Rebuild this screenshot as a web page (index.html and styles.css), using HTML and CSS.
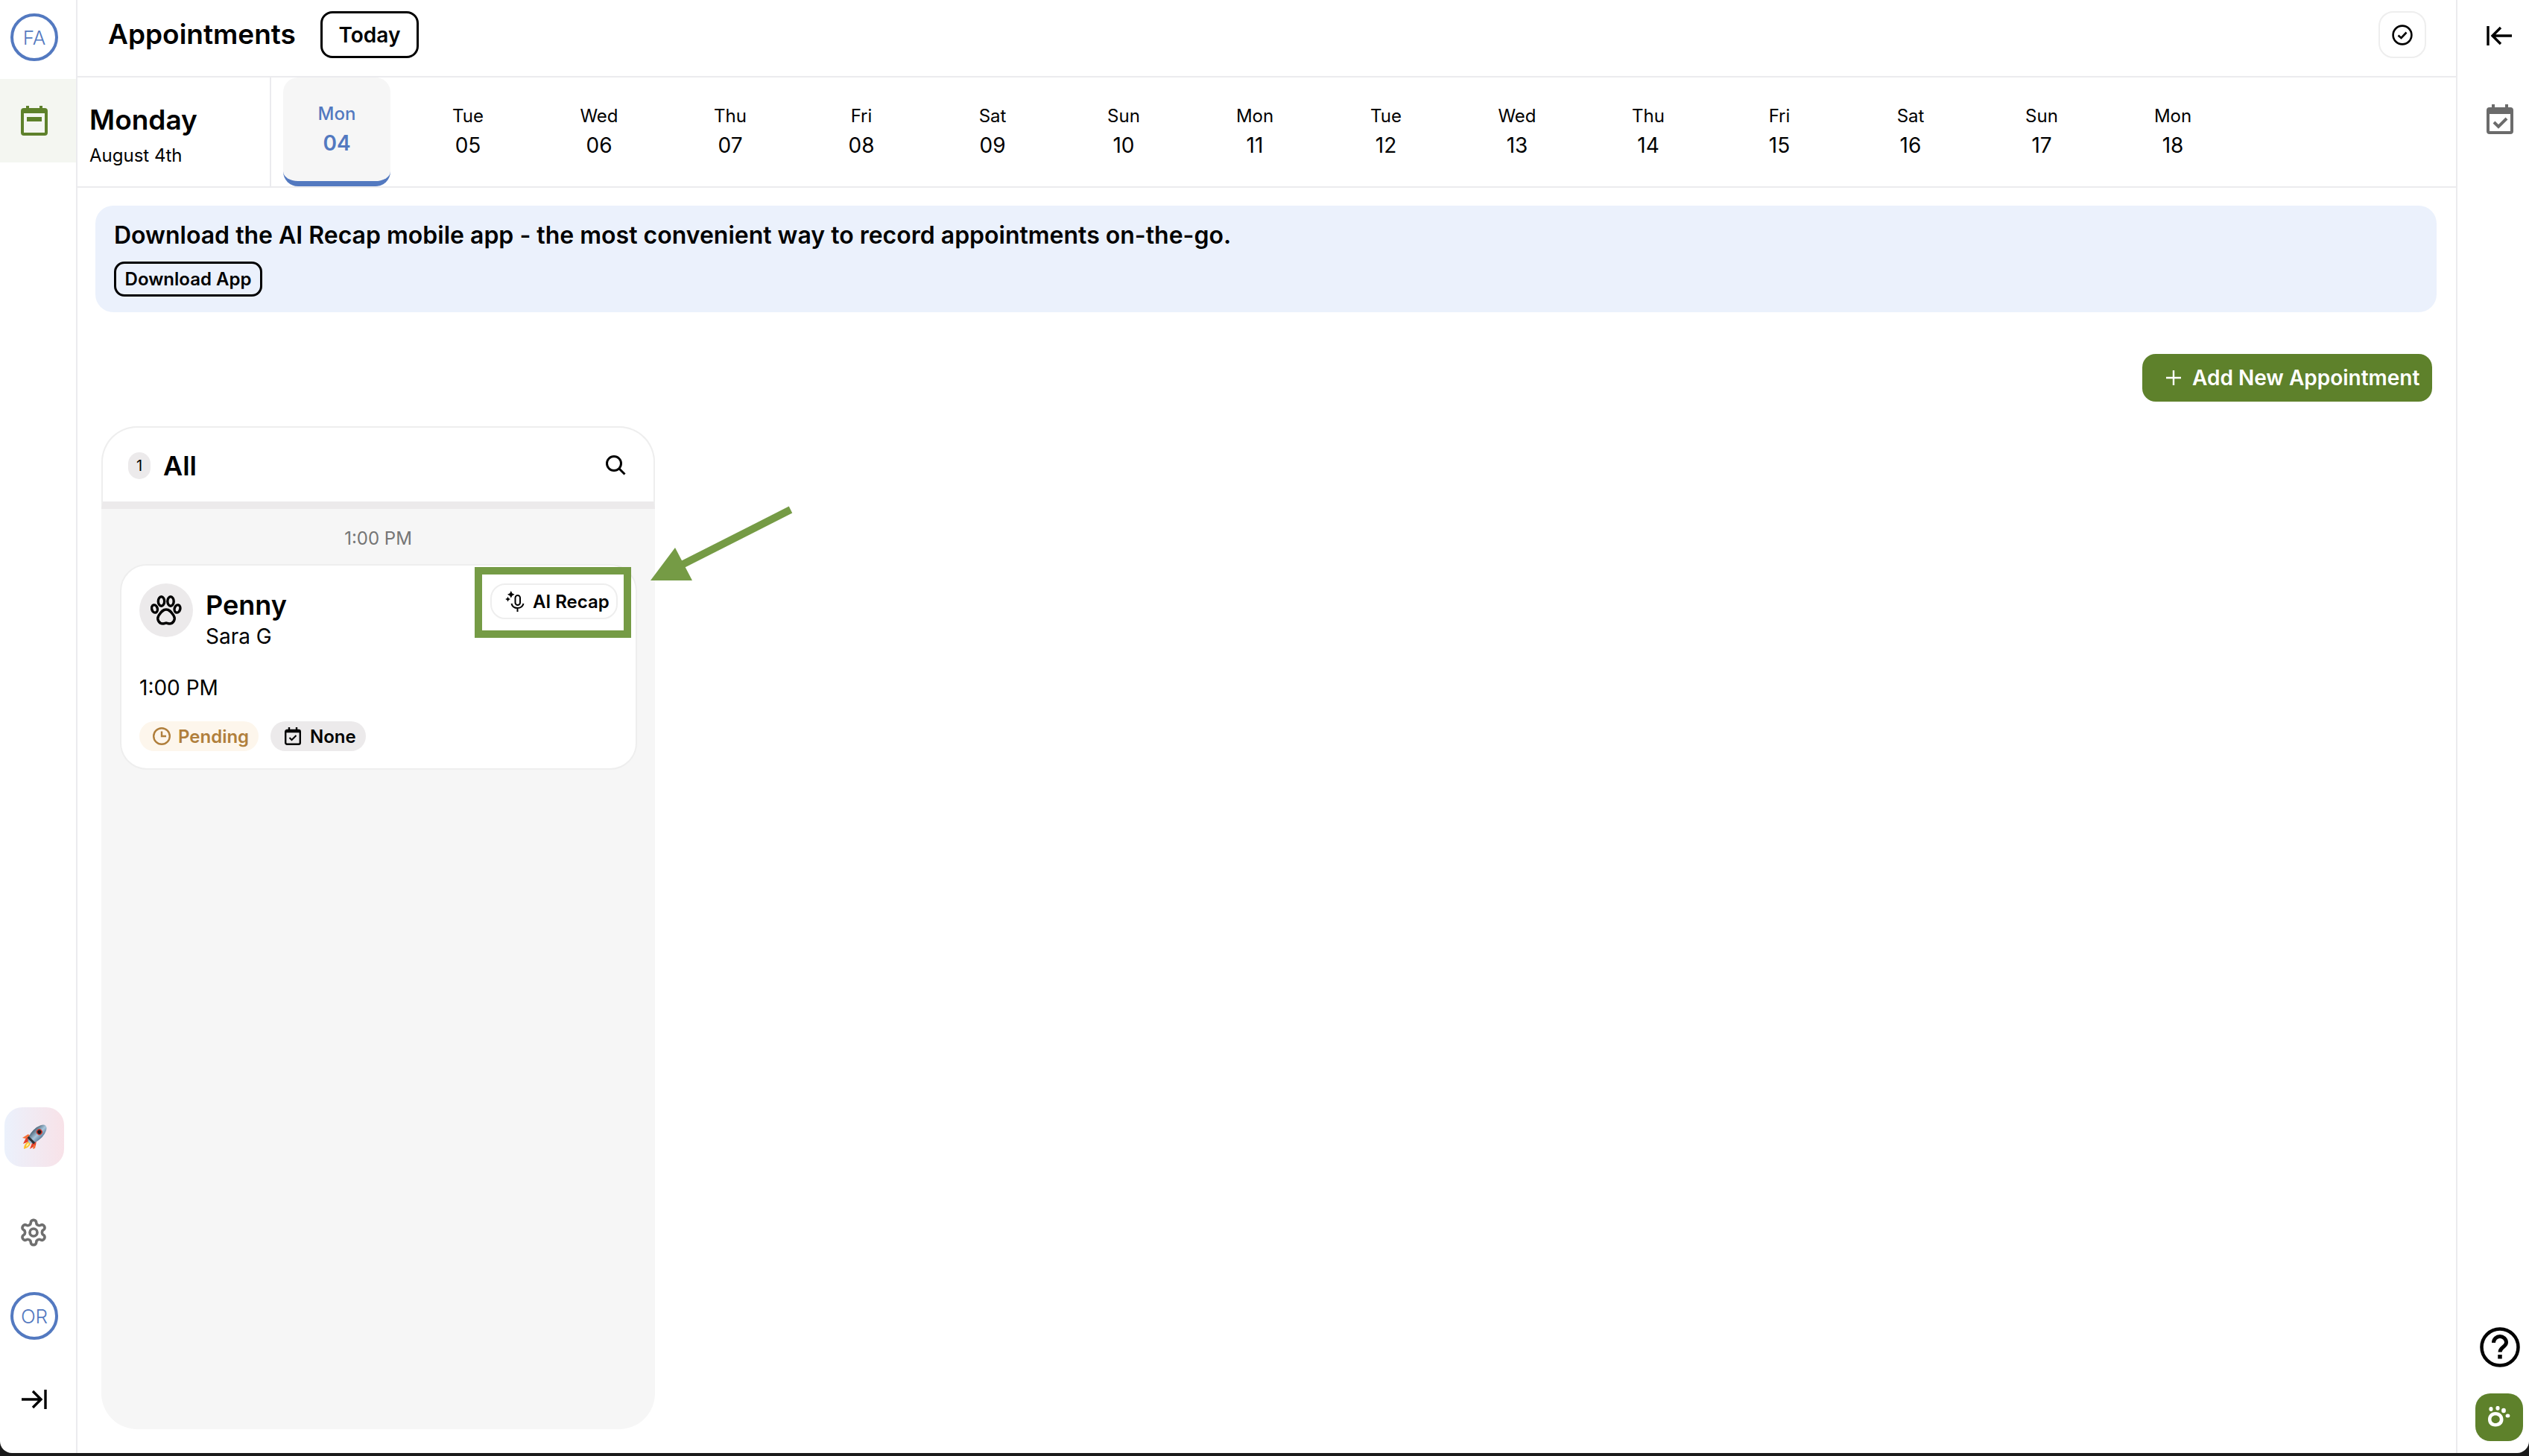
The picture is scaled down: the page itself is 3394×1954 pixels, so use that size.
FILE: index.html
```html
<!DOCTYPE html>
<html lang="en">
<head>
  <meta charset="UTF-8" />
  <title>Appointments</title>
  <link rel="stylesheet" href="styles.css">
</head>
<body>
  <div class="window">
    <nav class="sidenav">
      <div class="avatar avatar-top">FA</div>
      <div class="nav-item active">
        <svg width="36" height="40" viewBox="0 0 36 40" fill="none"><path d="M9 0v5M27 0v5" stroke="#5e812b" stroke-width="4"/><rect x="2" y="5" width="32" height="33" rx="2" stroke="#5e812b" stroke-width="4"/><rect x="2" y="5" width="32" height="5" fill="#5e812b"/><rect x="8" y="15" width="20" height="6" fill="#5e812b"/></svg>
      </div>
      <div class="nav-bottom">
        <div class="rocket-box">
          <svg width="34" height="34" viewBox="0 0 34 34">
            <defs><linearGradient id="hull" x1="0" y1="0" x2="1" y2="0"><stop offset="0" stop-color="#4d6678"/><stop offset=".55" stop-color="#a9c6dc"/><stop offset="1" stop-color="#5d7f9c"/></linearGradient></defs>
            <path d="M2 26 8 14l6 1-4 8z" fill="#e5402a"/>
            <path d="M11 33l8-5 1-7-6 4z" fill="#e5402a"/>
            <path d="M1 18l8-5 2 3-6 3zM15 33l1-6 3 1-1 4z" fill="#f5713a"/>
            <path d="M3 33c0-5 2-8 6-10l3 3c-2 4-5 6-9 7z" fill="#fbc02d"/>
            <path d="M6 30c0-2 1-4 3-5l1 1c-1 2-2 3-4 4z" fill="#fff3b0"/>
            <g transform="rotate(45 21 13)"><ellipse cx="21" cy="13" rx="7.5" ry="16" fill="url(#hull)"/><circle cx="21" cy="9" r="4" fill="#c9362a"/><circle cx="21" cy="9" r="2.6" fill="#1c1c22"/><rect x="15" y="23" width="12" height="3" fill="#2e3238"/></g>
          </svg>
        </div>
        <svg class="gear" width="40" height="42" viewBox="0 0 24 24" fill="none" stroke="#6f6f6f" stroke-width="2.2" stroke-linecap="round" stroke-linejoin="round"><path d="M12.22 2h-.44a2 2 0 0 0-2 2v.18a2 2 0 0 1-1 1.73l-.43.25a2 2 0 0 1-2 0l-.15-.08a2 2 0 0 0-2.73.73l-.22.38a2 2 0 0 0 .73 2.73l.15.1a2 2 0 0 1 1 1.72v.51a2 2 0 0 1-1 1.74l-.15.09a2 2 0 0 0-.73 2.73l.22.38a2 2 0 0 0 2.73.73l.15-.08a2 2 0 0 1 2 0l.43.25a2 2 0 0 1 1 1.73V20a2 2 0 0 0 2 2h.44a2 2 0 0 0 2-2v-.18a2 2 0 0 1 1-1.73l.43-.25a2 2 0 0 1 2 0l.15.08a2 2 0 0 0 2.73-.73l.22-.39a2 2 0 0 0-.73-2.73l-.15-.08a2 2 0 0 1-1-1.74v-.5a2 2 0 0 1 1-1.74l.15-.09a2 2 0 0 0 .73-2.73l-.22-.38a2 2 0 0 0-2.73-.73l-.15.08a2 2 0 0 1-2 0l-.43-.25a2 2 0 0 1-1-1.73V4a2 2 0 0 0-2-2z"/><circle cx="12" cy="12" r="3"/></svg>
        <div class="avatar">OR</div>
        <svg class="expand" width="34" height="26" viewBox="0 0 34 26" fill="none" stroke="#000" stroke-width="3.4"><path d="M0 13h26M15 2l11 11-11 11"/><path d="M32 0v26"/></svg>
      </div>
    </nav>

    <main class="main">
      <header class="topbar">
        <h1>Appointments</h1>
        <button class="today-btn">Today</button>
        <button class="check-btn">
          <svg width="28" height="28" viewBox="0 0 28 28" fill="none" stroke="#000" stroke-width="2.6"><circle cx="14" cy="14" r="12.4"/><path d="M8.5 14.5l4 3.5 7-7.5"/></svg>
        </button>
      </header>

      <section class="datebar">
        <div class="current-date">
          <div class="weekday">Monday</div>
          <div class="full-date">August 4th</div>
        </div>
        <div class="days">
          <div class="day selected"><span>Mon</span><b>04</b></div>
          <div class="day"><span>Tue</span><b>05</b></div>
          <div class="day"><span>Wed</span><b>06</b></div>
          <div class="day"><span>Thu</span><b>07</b></div>
          <div class="day"><span>Fri</span><b>08</b></div>
          <div class="day"><span>Sat</span><b>09</b></div>
          <div class="day"><span>Sun</span><b>10</b></div>
          <div class="day"><span>Mon</span><b>11</b></div>
          <div class="day"><span>Tue</span><b>12</b></div>
          <div class="day"><span>Wed</span><b>13</b></div>
          <div class="day"><span>Thu</span><b>14</b></div>
          <div class="day"><span>Fri</span><b>15</b></div>
          <div class="day"><span>Sat</span><b>16</b></div>
          <div class="day"><span>Sun</span><b>17</b></div>
          <div class="day"><span>Mon</span><b>18</b></div>
        </div>
      </section>

      <div class="banner">
        <p>Download the AI Recap mobile app - the most convenient way to record appointments on-the-go.</p>
        <button class="download-btn">Download App</button>
      </div>

      <div class="actions">
        <button class="add-btn">
          <svg width="20" height="20" viewBox="0 0 20 20" stroke="#fff" stroke-width="2.4"><path d="M10 0v20M0 10h20"/></svg>
          Add New Appointment
        </button>
      </div>

      <section class="column">
        <div class="column-head">
          <span class="count">1</span>
          <span class="column-title">All</span>
          <svg class="search" width="28" height="28" viewBox="0 0 28 28" fill="none" stroke="#000" stroke-width="3"><circle cx="12" cy="12" r="9.5"/><path d="M19 19l7.5 7.5"/></svg>
        </div>
        <div class="time-label">1:00 PM</div>
        <article class="card">
          <div class="card-top">
            <div class="pet-avatar">
              <svg width="42" height="42" viewBox="0 0 42 42" fill="none" stroke="#000" stroke-width="3.4"><ellipse cx="5.5" cy="19" rx="3.8" ry="5.2" transform="rotate(-15 5.5 19)"/><ellipse cx="14.5" cy="9" rx="4.2" ry="6.2"/><ellipse cx="27" cy="9" rx="4.2" ry="6.2"/><ellipse cx="36" cy="19" rx="3.8" ry="5.2" transform="rotate(15 36 19)"/><path d="M21 20c-5 0-7 4-10 8-3 5 0 11 6 11 2 0 3-1 4-1s2 1 4 1c6 0 9-6 6-11-3-4-5-8-10-8z"/></svg>
            </div>
            <div class="pet-info">
              <div class="pet-name">Penny</div>
              <div class="owner">Sara G</div>
            </div>
            <button class="recap-btn">
              <svg width="28" height="28" viewBox="0 0 28 28" fill="none"><path d="M6 0l2 4 4 2-4 2-2 4-2-4-4-2 4-2zM0 0" fill="#000" transform="translate(3 0) scale(.8)"/><path d="M3 9l1.3 2.7L7 13l-2.7 1.3L3 17l-1.3-2.7L-1 13l2.700-1.300z" fill="#000" transform="translate(1 0) scale(.85)"/><rect x="13.500" y="6" width="6.500" height="13" rx="3.250" stroke="#000" stroke-width="2"/><path d="M8.500 17c.8 4 4 6 8 6s7-2 8-6M16.500 23v5" stroke="#000" stroke-width="2"/></svg>
              AI Recap
            </button>
            <div class="highlight"></div>
          </div>
          <div class="appt-time">1:00 PM</div>
          <div class="chips">
            <span class="chip pending">
              <svg width="24" height="24" viewBox="0 0 24 24" fill="none" stroke="#b07f3c" stroke-width="2.400"><circle cx="12" cy="12" r="10.800"/><path d="M12 5.500V12h6"/></svg>
              Pending
            </span>
            <span class="chip none">
              <svg width="22" height="24" viewBox="0 0 22 24" fill="none" stroke="#000" stroke-width="2.400"><rect x="1.200" y="4" width="19.600" height="18.800" rx="2"/><path d="M6 0v5M16 0v5M1 6h20" /><path d="M6.500 14l3 3 6-6" stroke-width="2"/></svg>
              None
            </span>
          </div>
        </article>
      </section>
    </main>

    <aside class="sidepanel">
      <svg class="collapse" width="34" height="26" viewBox="0 0 34 26" fill="none" stroke="#000" stroke-width="3.400"><path d="M2 0v26"/><path d="M34 13H8M19 2L8 13l11 11"/></svg>
      <svg class="tasks" width="36" height="40" viewBox="0 0 36 40" fill="none"><path d="M9 0v6M27 0v6" stroke="#6b6b6b" stroke-width="4"/><rect x="2" y="6" width="32" height="32" rx="2" stroke="#6b6b6b" stroke-width="4"/><rect x="2" y="6" width="32" height="7" fill="#6b6b6b"/><path d="M10 24l6 6 11-11" stroke="#6b6b6b" stroke-width="4"/></svg>
      <div class="side-bottom">
        <svg class="help" width="54" height="54" viewBox="0 0 54 54" fill="none" stroke="#000"><circle cx="27" cy="27" r="24.500" stroke-width="4.500"/><path d="M18.500 21c0-5 4-8.500 8.500-8.500s8.500 3.500 8.500 8c0 6-8.500 6.500-8.500 13" stroke-width="5"/><path d="M27 37v5.500" stroke-width="5.500"/></svg>
        <button class="paw-btn">
          <svg width="30" height="30" viewBox="0 0 30 30" fill="#fff"><ellipse cx="4" cy="4" rx="2.600" ry="3" /><ellipse cx="13" cy="2.800" rx="2.600" ry="3"/><ellipse cx="21" cy="6" rx="2.900" ry="3.200"/><ellipse cx="26.500" cy="13" rx="2.900" ry="2.500"/><path fill-rule="evenodd" d="M10 8c6.500 0 10.500 4.500 10.500 10S16.500 27.500 10 27.500 0 23.500 0 18 3.500 8 10 8zm0 4.500c-3.500 0-5.500 2.500-5.500 5.200s2 5.300 5.500 5.300 5.800-2.500 5.800-5.300-2.300-5.200-5.800-5.200z"/></svg>
        </button>
      </div>
    </aside>

    <svg class="arrow" width="210" height="110" viewBox="0 0 210 110"><path d="M201 9L55 83" stroke="#759b45" stroke-width="10"/><path d="M46 60L13 104h56z" fill="#759b45"/></svg>
  </div>
</body>
</html>
```

FILE: styles.css
```css
:root {
  --green: #5e812b;
  --blue: #5379c0;
  --line: #ebebee;
  --soft: #f6f6f6;
  --chip: #eceaeb;
}

* {
  box-sizing: border-box;
  margin: 0;
  padding: 0;
  font-family: 'Inter', sans-serif;
}

html, body {
  height: 100%;
  background: #1a1a1a;
  overflow: hidden;
}

button {
  background: none;
  color: #000;
  cursor: pointer;
}

.window {
  position: relative;
  display: flex;
  height: 1950px;
  background: #fff;
  border-radius: 0 0 16px 16px;
  color: #000;
}

/* left nav */
.sidenav {
  width: 104px;
  flex-shrink: 0;
  border-right: 2px solid var(--line);
  display: flex;
  flex-direction: column;
}

.avatar {
  width: 64px;
  height: 64px;
  margin-left: 14px;
  border: 4px solid var(--blue);
  border-radius: 50%;
  display: flex;
  align-items: center;
  justify-content: center;
  font-size: 26px;
  font-weight: 300;
  color: var(--blue);
}

.avatar-top {
  margin-top: 18px;
}

.nav-item {
  height: 112px;
  margin-top: 24px;
  padding: 36px 0 0 28px;
}

.nav-item.active {
  background: #f4f6f1;
}

.nav-bottom {
  margin-top: auto;
  padding-bottom: 59px;
  display: flex;
  flex-direction: column;
}

.rocket-box {
  width: 80px;
  height: 80px;
  margin-left: 6px;
  border-radius: 24px;
  background: linear-gradient(90deg, #ebf1fc, #f8e2e8);
  display: flex;
  align-items: center;
  justify-content: center;
}

.gear {
  margin: 67px 0 59px 25px;
}

.expand {
  margin: 67px 0 0 29px;
}

/* main area */
.main {
  flex: 1;
  min-width: 0;
}

.topbar {
  height: 104px;
  border-bottom: 2px solid var(--line);
  padding: 15px 40px 0 41px;
  display: flex;
  align-items: flex-start;
}

.topbar h1 {
  margin-top: 9px;
  font-size: 37px;
  line-height: 44px;
  font-weight: 600;
}

.today-btn {
  width: 132px;
  height: 63px;
  margin-left: 33px;
  border: 3px solid #000;
  border-radius: 16px;
  font-size: 28px;
  font-weight: 600;
}

.check-btn {
  width: 64px;
  height: 63px;
  margin-left: auto;
  border: 2px solid #eeeeee;
  border-radius: 20px;
  display: flex;
  align-items: center;
  justify-content: center;
}

.datebar {
  height: 148px;
  border-bottom: 2px solid var(--line);
  display: flex;
}

.current-date {
  width: 260px;
  border-right: 2px solid var(--line);
  padding: 35px 0 0 16px;
}

.weekday {
  font-size: 37px;
  line-height: 44px;
  font-weight: 600;
}

.full-date {
  margin-top: 11px;
  font-size: 24px;
  line-height: 30px;
}

.days {
  display: flex;
  gap: 32px;
  padding-left: 16px;
}

.day {
  width: 144px;
  display: flex;
  flex-direction: column;
  align-items: center;
  padding-top: 37px;
  font-size: 24px;
  line-height: 30px;
}

.day b {
  margin-top: 9px;
  font-size: 28px;
  line-height: 30px;
  font-weight: 400;
}

.day.selected {
  height: 146px;
  padding-top: 34px;
  background: var(--soft);
  border-bottom: 7px solid var(--blue);
  border-radius: 20px;
  color: var(--blue);
  font-weight: 500;
}

.day.selected b {
  font-weight: 600;
}

.banner {
  margin: 24px 26px 0 24px;
  height: 143px;
  padding: 20px 25px 0;
  background: #ebf1fc;
  border-radius: 24px;
}

.banner p {
  font-size: 32px;
  line-height: 40px;
  font-weight: 600;
}

.download-btn {
  display: block;
  width: 199px;
  height: 47px;
  margin-top: 15px;
  border: 3px solid #000;
  border-radius: 14px;
  font-size: 24px;
  font-weight: 600;
}

.actions {
  display: flex;
  justify-content: flex-end;
  margin-top: 56px;
  padding-right: 32px;
}

.add-btn {
  width: 389px;
  height: 64px;
  border: none;
  border-radius: 18px;
  background: var(--green);
  color: #fff;
  display: flex;
  align-items: center;
  padding-left: 32px;
  gap: 15px;
  font-size: 28px;
  font-weight: 600;
  white-space: nowrap;
}

/* appointments column */
.column {
  width: 743px;
  height: 1346px;
  margin: 33px 0 0 32px;
  background: var(--soft);
  border-radius: 48px;
}

.column-head {
  height: 111px;
  padding: 33px 37px 0 34px;
  background: #fff;
  border: 2px solid #eeeeee;
  border-bottom: 10px solid var(--chip);
  border-radius: 48px 48px 0 0;
  display: flex;
  align-items: flex-start;
}

.count {
  width: 30px;
  height: 36px;
  background: var(--chip);
  border-radius: 15px;
  font-size: 20px;
  line-height: 36px;
  text-align: center;
}

.column-title {
  margin-left: 17px;
  font-size: 36px;
  line-height: 36px;
  font-weight: 600;
}

.search {
  margin: 3px 0 0 auto;
}

.time-label {
  margin-top: 25px;
  font-size: 24px;
  line-height: 30px;
  text-align: center;
  color: #757575;
}

.card {
  height: 276px;
  margin: 19px 24px 0 25px;
  padding: 24px;
  background: #fff;
  border: 2px solid #eeeeee;
  border-radius: 36px;
}

.card-top {
  position: relative;
  display: flex;
  align-items: flex-start;
}

.pet-avatar {
  width: 72px;
  height: 72px;
  background: var(--chip);
  border-radius: 50%;
  display: flex;
  align-items: center;
  justify-content: center;
}

.pet-info {
  margin-left: 17px;
}

.pet-name {
  margin-top: 7px;
  font-size: 36px;
  line-height: 44px;
  font-weight: 600;
}

.owner {
  margin-top: 3px;
  font-size: 28px;
  line-height: 34px;
}

.recap-btn {
  width: 171px;
  height: 48px;
  margin-left: auto;
  border: 2px solid #eeeeee;
  border-radius: 20px;
  display: flex;
  align-items: center;
  padding-left: 18px;
  gap: 9px;
  font-size: 24px;
  font-weight: 600;
  white-space: nowrap;
}

/* annotation drawn on the screenshot */
.highlight {
  position: absolute;
  right: -18px;
  top: -22px;
  width: 210px;
  height: 95px;
  border: 10px solid #759b45;
}

.recap-btn {
  position: relative;
  z-index: 1;
}

.arrow {
  position: absolute;
  left: 860px;
  top: 675px;
}

.appt-time {
  margin-top: 35px;
  font-size: 28px;
  line-height: 34px;
}

.chips {
  display: flex;
  gap: 16px;
  margin-top: 28px;
}

.chip {
  height: 40px;
  border-radius: 20px;
  display: flex;
  align-items: center;
  gap: 10px;
  padding-left: 18px;
  font-size: 24px;
  font-weight: 600;
}

.chip.pending {
  width: 160px;
  background: #fdf6ec;
  color: #b07f3c;
}

.chip.none {
  width: 128px;
  padding-left: 19px;
  gap: 12px;
  background: var(--chip);
}

/* right rail */
.sidepanel {
  width: 98px;
  flex-shrink: 0;
  border-left: 2px solid var(--line);
  display: flex;
  flex-direction: column;
  padding-left: 39px;
}

.collapse {
  margin-top: 35px;
}

.tasks {
  margin-top: 79px;
}

.side-bottom {
  margin: auto 0 16px -15px;
  display: flex;
  flex-direction: column;
}

.help {
  margin-left: 6px;
}

.paw-btn {
  width: 64px;
  height: 64px;
  margin-top: 35px;
  border: none;
  border-radius: 20px;
  background: var(--green);
  display: flex;
  align-items: center;
  justify-content: center;
}
```
